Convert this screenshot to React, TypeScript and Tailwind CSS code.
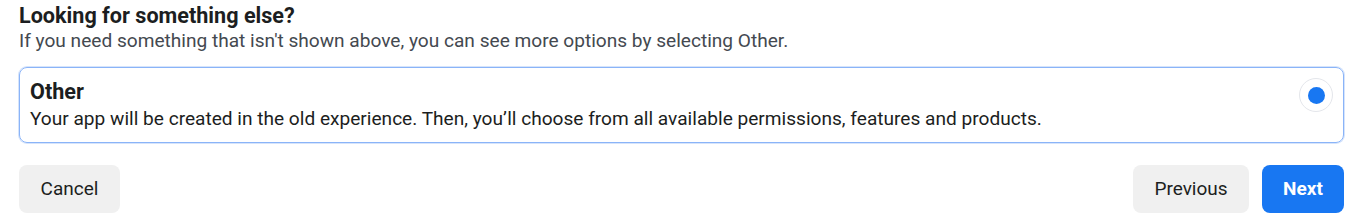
export default function App() {
  return (
    <div className="w-[1366px] h-[222px] bg-white pl-[19px] pr-[22px] pt-[3px] text-[#1c1e21]" style={{ fontFamily: 'Roboto, "Liberation Sans", sans-serif' }}>
      <h2 className="text-[21.6px] font-bold leading-[26px]">Looking for something else?</h2>
      <p className="text-[19.1px] leading-[24px] text-[#444950]">
        If you need something that isn't shown above, you can see more options by selecting Other.
      </p>
      <div className="mt-[14px] flex items-start justify-between rounded-[8px] border border-[#8ab4f8] shadow-[0_0_0_1px_#d6e4fb] pl-[10px] pr-[10px] pt-[10px] h-[76px]">
        <div className="pt-[2px]">
          <div className="text-[21.6px] font-bold leading-[24px]">Other</div>
          <div className="text-[19.1px] leading-[24px] text-[#1c1e21] mt-[3px]">
            Your app will be created in the old experience. Then, you’ll choose from all available permissions, features and products.
          </div>
        </div>
        <div className="w-[34px] h-[34px] rounded-full border border-[#e4e6eb] flex items-center justify-center">
          <div className="w-[17px] h-[17px] rounded-full bg-[#1877f2]" />
        </div>
      </div>
      <div className="mt-[22px] flex items-center justify-between">
        <button className="h-[48px] w-[101px] rounded-[8px] bg-[#f0f0f0] text-[19px] text-[#1c1e21]">Cancel</button>
        <div className="flex gap-[13px]">
          <button className="h-[48px] w-[116px] rounded-[8px] bg-[#f0f0f0] text-[19px] text-[#1c1e21]">Previous</button>
          <button className="h-[48px] w-[82px] rounded-[8px] bg-[#1877f2] text-[19px] font-bold text-white">Next</button>
        </div>
      </div>
    </div>
  );
}
